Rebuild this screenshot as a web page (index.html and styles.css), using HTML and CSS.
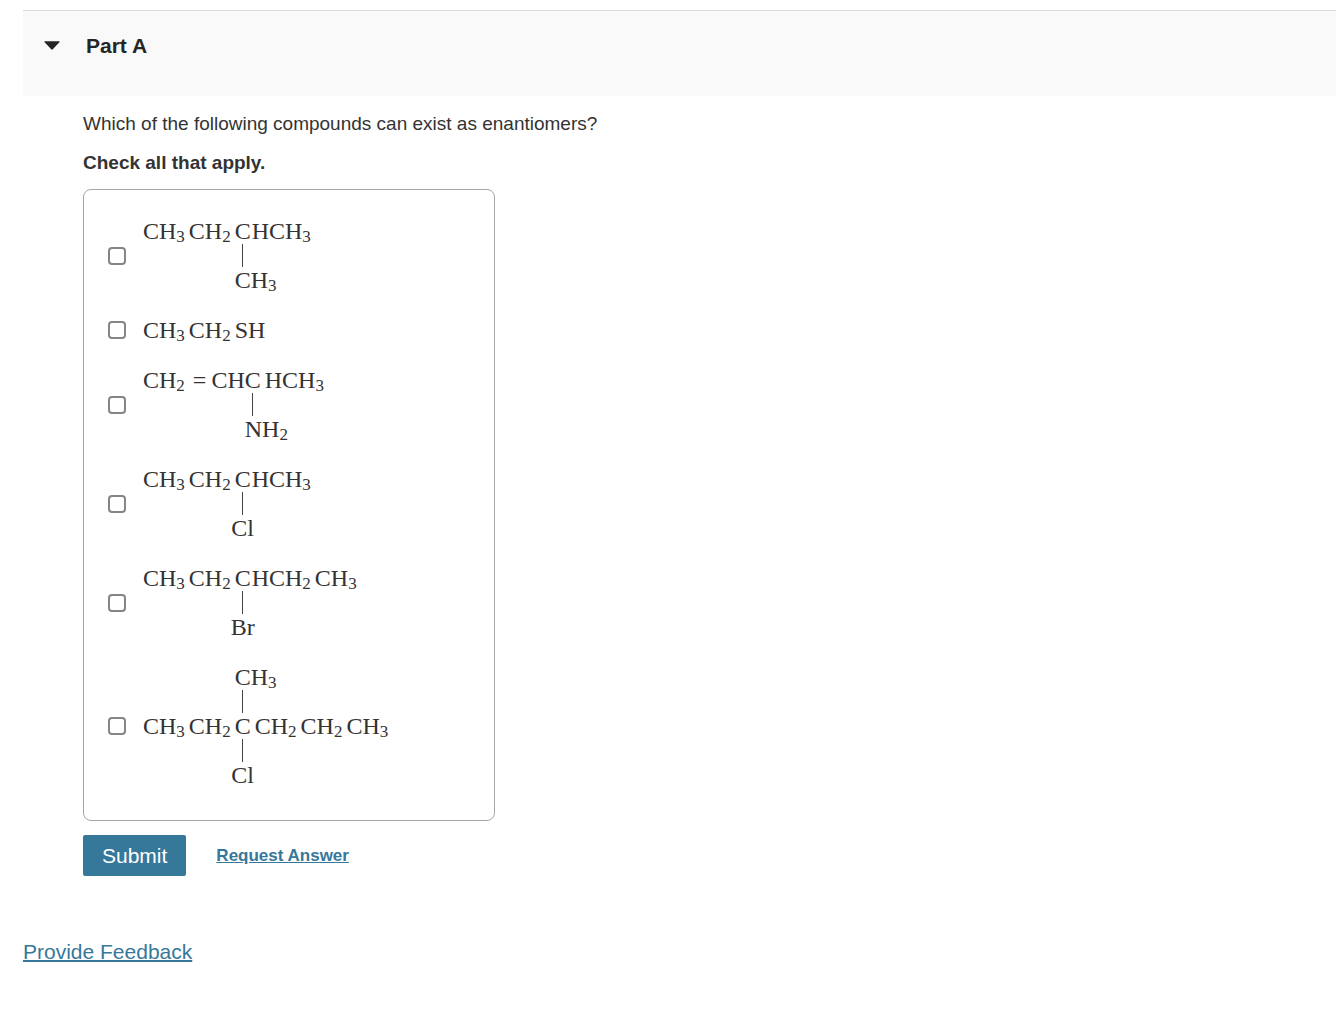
FILE: index.html
```html
<!DOCTYPE html>
<html lang="en">
<head>
<meta charset="utf-8">
<meta name="viewport" content="width=device-width, initial-scale=1">
<title>Part A</title>
<link rel="stylesheet" href="styles.css">
</head>
<body>
<main class="page">
  <header class="part-header">
    <button class="toggle" type="button" aria-label="Collapse Part A" aria-expanded="true">
      <svg width="16" height="10" viewBox="0 0 16 10" aria-hidden="true"><path d="M1 0.3H15Q16.3 0.3 15.4 1.3L8.8 8.3Q8 9.2 7.2 8.3L0.6 1.3Q-0.3 0.3 1 0.3Z" fill="#252525"/></svg>
    </button>
    <h2 class="part-title">Part A</h2>
  </header>

  <form class="question">
    <p class="prompt">Which of the following compounds can exist as enantiomers?</p>
    <p class="instruction" id="instruction">Check all that apply.</p>

    <div class="options" role="group" aria-labelledby="instruction">
      <label class="option">
        <input class="tick" type="checkbox" name="compound">
        <span class="formula">
          <span class="before">CH<sub>3</sub>CH<sub>2</sub></span><span class="atom">C</span><span class="after">HCH<sub>3</sub></span>
          <span class="bond"></span>
          <span class="branch branch-start">CH<sub>3</sub></span>
        </span>
      </label>
      <label class="option">
        <input class="tick" type="checkbox" name="compound">
        <span class="formula-line">CH<sub>3</sub>CH<sub>2</sub>SH</span>
      </label>
      <label class="option">
        <input class="tick" type="checkbox" name="compound">
        <span class="formula">
          <span class="before">CH<sub>2</sub><span class="double-bond">=</span>CH</span><span class="atom">C</span><span class="after after-wide">HCH<sub>3</sub></span>
          <span class="bond"></span>
          <span class="branch branch-start">NH<sub>2</sub></span>
        </span>
      </label>
      <label class="option">
        <input class="tick" type="checkbox" name="compound">
        <span class="formula">
          <span class="before">CH<sub>3</sub>CH<sub>2</sub></span><span class="atom">C</span><span class="after">HCH<sub>3</sub></span>
          <span class="bond"></span>
          <span class="branch">Cl</span>
        </span>
      </label>
      <label class="option">
        <input class="tick" type="checkbox" name="compound">
        <span class="formula">
          <span class="before">CH<sub>3</sub>CH<sub>2</sub></span><span class="atom">C</span><span class="after">HCH<sub>2</sub>CH<sub>3</sub></span>
          <span class="bond"></span>
          <span class="branch">Br</span>
        </span>
      </label>
      <label class="option">
        <input class="tick" type="checkbox" name="compound">
        <span class="formula">
          <span class="branch branch-start">CH<sub>3</sub></span>
          <span class="bond"></span>
          <span class="before">CH<sub>3</sub>CH<sub>2</sub></span><span class="atom">C</span><span class="after after-wide">CH<sub>2</sub>CH<sub>2</sub>CH<sub>3</sub></span>
          <span class="bond"></span>
          <span class="branch">Cl</span>
        </span>
      </label>
    </div>

    <div class="actions">
      <button class="submit" type="button">Submit</button>
      <a class="request" href="#">Request Answer</a>
    </div>
  </form>

  <a class="feedback" href="#">Provide Feedback</a>
</main>
</body>
</html>
```
FILE: styles.css
```css
* {
  box-sizing: border-box;
}

body {
  margin: 0;
  background: #fff;
  color: #333;
  font-family: "Liberation Sans", Arial, sans-serif;
}

.page {
  padding: 10px 0 60px 23px;
}

.part-header {
  display: flex;
  align-items: flex-start;
  gap: 26px;
  padding: 22px 21px 38px;
  border-top: 1px solid #dcdcdc;
  background: #f9f9f9;
}

.toggle {
  display: flex;
  align-items: center;
  height: 25px;
  padding: 0;
  border: 0;
  background: none;
}

.part-title {
  margin: 0;
  color: #252525;
  font-size: 21px;
  line-height: 25px;
}

.question {
  padding: 16px 24px 0 60px;
}

.prompt,
.instruction {
  margin: 0 0 14px;
  font-size: 19px;
  line-height: 24px;
}

.prompt {
  margin-bottom: 15px;
}

.instruction {
  font-weight: bold;
}

.options {
  display: flex;
  flex-direction: column;
  gap: 26px;
  max-width: 412px;
  padding: 29px 24px 33px;
  border: 1px solid #a6a6a6;
  border-radius: 8px;
}

.option {
  display: flex;
  align-items: center;
  gap: 17px;
  font-family: "Liberation Serif", "Times New Roman", serif;
  font-size: 24px;
  line-height: 24px;
}

.tick {
  appearance: none;
  flex: none;
  width: 18px;
  height: 18px;
  margin: 0;
  border: 2px solid #858585;
  border-radius: 4px;
  background: #fff;
}

.tick:checked {
  background: #36789a;
}

/* The middle column holds the carbon that carries the branches. */
.formula {
  display: grid;
  grid-template-columns: auto 16px auto;
  white-space: nowrap;
}

.before {
  grid-column: 1;
}

.atom {
  grid-column: 2;
}

.after {
  grid-column: 3;
  padding-left: 1px;
}

.after-wide {
  padding-left: 4px;
}

.bond {
  grid-column: 2;
  justify-self: center;
  width: 1px;
  height: 23px;
  margin: 1px 0;
  background: #444;
}

.branch {
  grid-column: 2;
  justify-self: center;
}

.branch-start {
  justify-self: start;
}

.double-bond {
  margin: 0 5px 0 4px;
}

sub {
  margin-right: 4px;
  font-size: 17px;
  line-height: 0;
  vertical-align: -3px;
}

.actions {
  display: flex;
  align-items: center;
  gap: 30px;
  padding-top: 14px;
}

.submit {
  height: 41px;
  padding: 0 19px;
  border: 0;
  border-radius: 2px;
  background: #36789a;
  color: #fff;
  font-family: inherit;
  font-size: 21px;
}

.request,
.feedback {
  color: #36789a;
}

.request {
  font-size: 17px;
  font-weight: bold;
}

.feedback {
  display: inline-block;
  margin-top: 64px;
  font-size: 21px;
  line-height: 24px;
  text-decoration-thickness: 2px;
}
```
